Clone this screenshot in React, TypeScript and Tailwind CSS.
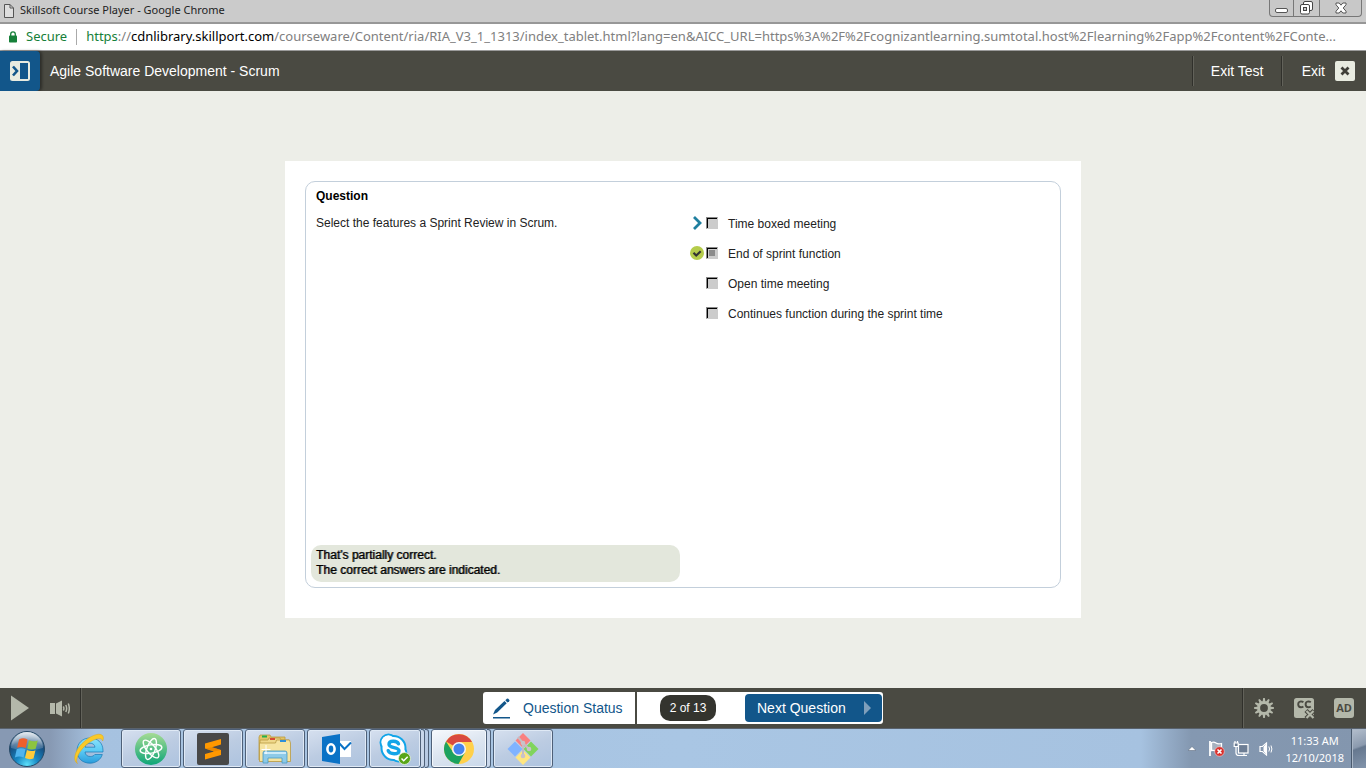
import React from "react";

type Answer = { id: string; label: string; mark?: "missed" | "correct"; checked?: boolean };

const answers: Answer[] = [
  { id: "a1", label: "Time boxed meeting", mark: "missed" },
  { id: "a2", label: "End of sprint function", mark: "correct", checked: true },
  { id: "a3", label: "Open time meeting" },
  { id: "a4", label: "Continues function during the sprint time" },
];

function TitleBar() {
  return (
    <div className="flex h-6 items-start justify-between border-b-2 border-[#979797] bg-[#cbcbcb] pl-1 pr-1 font-['Noto_Sans','Open_Sans',sans-serif]">
      <div className="flex h-[21px] items-center gap-[6px]">
        <svg width="10" height="14" viewBox="0 0 10 14" fill="#dedede" stroke="#555" strokeWidth="1">
          <path d="M.5.5h5.500l3.500 3.500v9.500h-9z" />
          <path d="M6 .5V4h3.500" fill="none" />
        </svg>
        <span className="whitespace-nowrap text-[11px] text-[#222]">Skillsoft Course Player - Google Chrome</span>
      </div>
      <div className="flex h-[17px] overflow-hidden rounded-b border border-t-0 border-[#777] bg-[#c8c8c8]">
        <button aria-label="Minimize" className="flex w-6 items-center justify-center border-r border-[#777]">
          <svg width="13" height="14" viewBox="0 0 13 14"><rect x=".5" y="7.500" width="12" height="4" rx="1.500" fill="#fff" stroke="#555" /></svg>
        </button>
        <button aria-label="Restore" className="flex w-[26px] items-center justify-center border-r border-[#777]">
          <svg width="13" height="14" viewBox="0 0 13 14" fill="#fff" stroke="#444">
            <rect x="3.500" y=".5" width="9" height="9" rx="1.500" />
            <rect x=".5" y="3.500" width="9" height="9.500" rx="1.500" />
            <rect x="3.500" y="6.500" width="3" height="3" fill="#ccc" />
          </svg>
        </button>
        <button aria-label="Close" className="flex w-[41px] items-center justify-center">
          <svg width="12" height="12" viewBox="0 0 12 12">
            <path d="M1 1h3.200L6 3.200 7.800 1H11v1.800L8.200 6 11 9.200V11H7.800L6 8.800 4.200 11H1V9.200L3.800 6 1 2.800z" fill="#fff" stroke="#555" />
          </svg>
        </button>
      </div>
    </div>
  );
}

function AddressBar() {
  return (
    <div className="flex h-[27px] items-center border-b border-[#9b9b9b] bg-white pl-2 pr-2 font-['Noto_Sans','Open_Sans',sans-serif] text-[13px]">
      <svg width="10" height="12" viewBox="0 0 10 12" className="shrink-0">
        <rect x="1" y="4.500" width="8" height="7" rx=".8" fill="#168039" />
        <path d="M2.700 5V3.200a2.300 2.300 0 0 1 4.600 0V5" fill="none" stroke="#168039" strokeWidth="1.300" />
      </svg>
      <span className="ml-2 shrink-0 text-[#168039]">Secure</span>
      <span className="ml-[9px] h-4 w-px shrink-0 bg-[#aaa]" />
      <span className="ml-[9px] min-w-0 truncate text-[#808080]">
        <span className="text-[#168039]">https</span>://<span className="text-black">cdnlibrary.skillport.com</span>
        /courseware/Content/ria/RIA_V3_1_1313/index_tablet.html?lang=en&amp;AICC_URL=https%3A%2F%2Fcognizantlearning.sumtotal.host%2Flearning%2Fapp%2Fcontent%2FConte...
      </span>
    </div>
  );
}

function CourseHeader() {
  return (
    <header className="flex h-10 items-center justify-between bg-[#4a4a42] text-sm text-white">
      <div className="flex h-full items-center gap-[10px]">
        <button aria-label="Open menu" className="flex h-full w-10 items-center justify-center rounded-r bg-[#12568a] shadow-[2px_0_3px_rgba(0,0,0,0.4)]">
          <svg width="20" height="20" viewBox="0 0 20 20">
            <rect width="20" height="20" rx="2.500" fill="#e8ebe0" />
            <rect x="10" y="2" width="8" height="16" fill="#12568a" />
            <path d="M3 5.500L7 10l-4 4.500" fill="none" stroke="#12568a" strokeWidth="2.600" />
          </svg>
        </button>
        <h1>Agile Software Development - Scrum</h1>
      </div>
      <div className="flex items-center pr-[11px]">
        <span className="h-[30px] w-[2px] border-l border-r border-l-[#30302b] border-r-[#62625a]" />
        <button className="w-[87px] whitespace-nowrap">Exit Test</button>
        <span className="h-[30px] w-[2px] border-l border-r border-l-[#30302b] border-r-[#62625a]" />
        <button className="flex items-center gap-[10px] pl-[19px]">
          Exit
          <svg width="20" height="20" viewBox="0 0 20 20">
            <rect width="20" height="20" rx="2" fill="#e8ebe0" />
            <path d="M6.500 6.500l7 7m0-7l-7 7" stroke="#3f3f38" strokeWidth="2.800" />
          </svg>
        </button>
      </div>
    </header>
  );
}

function AnswerMark({ mark }: { mark?: Answer["mark"] }) {
  if (mark === "missed")
    return (
      <svg width="14" height="14" viewBox="0 0 14 14">
        <path d="M4 1l6 6-6 6" fill="none" stroke="#1f7f9f" strokeWidth="2.800" />
      </svg>
    );
  if (mark === "correct")
    return (
      <svg width="14" height="14" viewBox="0 0 14 14">
        <circle cx="7" cy="7" r="7" fill="#b5cc4b" />
        <path d="M3.500 6.800l2.700 2.700 4.500-4.300" fill="none" stroke="#333" strokeWidth="2.200" />
      </svg>
    );
  return <span className="w-[14px]" />;
}

function Question() {
  return (
    <main className="flex grow items-center justify-center bg-[#edeee8] py-4">
      <div className="w-full max-w-[796px] bg-white px-5 pb-[30px] pt-5">
        <section className="flex min-h-[407px] flex-col rounded-[10px] border border-[#c3cfdb] p-[5px] text-xs leading-[15px] text-[#222]">
          <div className="grid grow grid-cols-[374px_1fr] content-start pl-[5px] pt-[2px]">
            <h2 className="col-span-2 mb-3 font-bold text-black">Question</h2>
            <p>Select the features a Sprint Review in Scrum.</p>
            <ul className="flex flex-col gap-[14px]">
              {answers.map((a) => (
                <li key={a.id} className="flex h-4 items-center">
                  <span className="mr-[2px] flex h-[14px] w-[14px] shrink-0 self-start justify-center">
                    <AnswerMark mark={a.mark} />
                  </span>
                  <input
                    id={a.id}
                    type="checkbox"
                    defaultChecked={a.checked}
                    className="mt-px h-3 w-3 shrink-0 self-start appearance-none border border-b-[#ccc] border-l-[#888] border-r-[#ccc] border-t-[#888] bg-[#ccc] shadow-[inset_1px_1px_0_#000] checked:bg-[linear-gradient(#8c8c8c,#8c8c8c)] checked:bg-[length:6px_6px] checked:bg-center checked:bg-no-repeat"
                  />
                  <label htmlFor={a.id} className="pl-[10px]">{a.label}</label>
                </li>
              ))}
            </ul>
          </div>
          <div className="w-full max-w-[369px] rounded-[10px] bg-[#e3e7dc] px-[5px] pb-1 pt-[3px] text-black [text-shadow:1px_0_0_rgba(0,0,0,0.6)]">
            <p>That's partially correct.</p>
            <p>The correct answers are indicated.</p>
          </div>
        </section>
      </div>
    </main>
  );
}

function GearIcon() {
  const teeth = Array.from({ length: 12 }, (_, i) => i * 30);
  return (
    <svg width="20" height="20" viewBox="0 0 20 20" fill="#b4b8aa">
      {teeth.map((t) => (
        <path key={t} d="M9.200 0h1.600l.7 4H8.500z" transform={`rotate(${t} 10 10)`} />
      ))}
      <circle cx="10" cy="10" r="5.400" fill="none" stroke="#b4b8aa" strokeWidth="3" />
    </svg>
  );
}

function PlayerBar() {
  return (
    <div className="grid h-10 grid-cols-[1fr_400px_1fr] items-center bg-[#4a4a42] text-sm">
      <div className="flex h-full items-center">
        <button aria-label="Play" className="flex w-10 justify-center">
          <svg width="18" height="26" viewBox="0 0 18 26"><path d="M0 .5L18 13 0 25.500z" fill="#b4b8aa" /></svg>
        </button>
        <button aria-label="Volume" className="flex w-10 justify-center">
          <svg width="20" height="17" viewBox="0 0 20 17" fill="#b4b8aa">
            <rect x="0" y="3" width="5" height="11" />
            <path d="M6 3.500L12 .5v16l-6-3z" />
            <path d="M13.300 6.500q1.200 2 0 4M15.800 5q1.700 3.500 0 7M18.300 3.500q2 5 0 10" fill="none" stroke="#b4b8aa" strokeWidth="1.500" />
          </svg>
        </button>
        <span className="h-full w-[2px] border-l border-r border-l-[#30302b] border-r-[#62625a]" />
      </div>
      <div className="flex h-8 gap-[2px] overflow-hidden rounded-[3px]">
        <button className="flex w-[152px] items-center gap-3 bg-white pl-[9px] text-[#12568a]">
          <svg width="19" height="21" viewBox="0 0 19 21" fill="#12568a">
            <path d="M1 16.500l2-4.500L12.500 3l2.200 2.200L5.200 14.500z" />
            <path d="M13.300 2.200L14.800.8q.8-.6 1.500 0l.9.9q.7.8 0 1.500l-1.700 1.400z" />
            <rect x="1" y="19" width="17" height="1.500" />
          </svg>
          <span className="whitespace-nowrap">Question Status</span>
        </button>
        <div className="flex grow items-center bg-white pl-[23px]">
          <span className="flex h-[26px] w-14 items-center justify-center whitespace-nowrap rounded-[10px] bg-[#34342e] text-xs text-white">2 of 13</span>
          <button className="ml-[29px] flex h-7 w-[137px] items-center justify-between rounded bg-[#12568a] pl-3 pr-[11px] text-white">
            Next Question
            <svg width="7" height="14" viewBox="0 0 7 14"><path d="M0 0l7 7-7 7z" fill="#7f9fbb" /></svg>
          </button>
        </div>
      </div>
      <div className="flex h-full items-center justify-end">
        <span className="h-full w-[2px] border-l border-r border-l-[#30302b] border-r-[#62625a]" />
        <button aria-label="Settings" className="flex w-10 justify-center"><GearIcon /></button>
        <button aria-label="Captions off" className="flex w-10 justify-center">
          <svg width="22" height="22" viewBox="0 0 22 22">
            <rect x="1" y="1" width="20" height="20" rx="2.500" fill="#b4b8aa" />
            <path d="M10.400 5.300Q9.300 4.400 7.900 4.400 5.200 4.700 5.200 7.400q.1 2.700 2.700 2.900 1.400 0 2.500-.8M17.800 5.300q-1.100-.9-2.500-.9-2.700.3-2.700 3 .1 2.700 2.700 2.900 1.400 0 2.500-.8" fill="none" stroke="#4a4a42" strokeWidth="1.900" />
            <path d="M13 13.500l8 8m0-8l-8 8" stroke="#4a4a42" strokeWidth="4.400" />
            <path d="M13.500 14l7 7m0-7l-7 7" stroke="#b4b8aa" strokeWidth="2.200" />
          </svg>
        </button>
        <button aria-label="Audio description" className="flex w-10 justify-center">
          <span className="flex h-5 w-5 items-center justify-center rounded-[3px] bg-[#b4b8aa] font-['Open_Sans',sans-serif] text-[11px] font-bold text-[#4a4a42]">AD</span>
        </button>
        <span className="w-[2px]" />
      </div>
    </div>
  );
}

function WindowsIcon() {
  return (
    <svg width="38" height="38" viewBox="0 0 38 38">
      <defs>
        <radialGradient id="orb" cx=".5" cy=".95" r=".9">
          <stop offset="0" stopColor="#5de0fa" />
          <stop offset=".35" stopColor="#1788c4" />
          <stop offset=".75" stopColor="#174b7c" />
          <stop offset="1" stopColor="#8ba5bd" />
        </radialGradient>
        <linearGradient id="gloss" x2="0" y2="1">
          <stop offset="0" stopColor="#fff" stopOpacity=".75" />
          <stop offset="1" stopColor="#fff" stopOpacity=".1" />
        </linearGradient>
      </defs>
      <circle cx="19" cy="19" r="17.500" fill="url(#orb)" stroke="#264966" />
      <path d="M3 18a16 16 0 0 1 32 0q-16 5-32 0z" fill="url(#gloss)" />
      <path d="M11 9.500q4-2.500 8.500 0L17.800 18q-4.500-2-8.700-.2z" fill="#ee5f2c" />
      <path d="M21 10.300q4.500 2 8.700.2l-2 8.300q-4.500 1.700-8.400-.3z" fill="#8cc440" />
      <path d="M8.700 19.300q4.300-2 8.800 0l-1.900 8.200q-4.500-2-8.700-.1z" fill="#4fb4ee" />
      <path d="M18.900 20q4.200 2 8.600.2l-2 8.200q-4.200 1.700-8.500-.3z" fill="#fccb3c" />
    </svg>
  );
}

function IEIcon() {
  return (
    <svg width="32" height="32" viewBox="0 0 32 32">
      <defs>
        <linearGradient id="ie" x2="0" y2="1">
          <stop offset="0" stopColor="#8ae2fb" />
          <stop offset=".5" stopColor="#5ccbf4" />
          <stop offset="1" stopColor="#2a9cdc" />
        </linearGradient>
      </defs>
      <path d="M30 19H12c.3 3 2.300 4.500 5.300 4.500 2 0 3.500-.6 4.500-2h7.500c-1.500 5.300-6.600 8.700-12.300 8.700C9.300 30.200 4 25 4 17.800S9.300 5 17 5s13 5 13 12.500zM12 14.200h10c-.4-2.600-2.300-4-5-4s-4.500 1.400-5 4z" fill="url(#ie)" stroke="#1878b4" strokeWidth=".7" />
      <path d="M4.500 30.500C-.5 28 1.500 18 9 10.500S26-1 29.500 2.500c1.200 1.300 1 3.300.2 5.500C29 3.500 20 5.500 12 13 4.500 20 2 28.500 4.500 30.500z" fill="#f9c928" stroke="#dda717" strokeWidth=".5" />
    </svg>
  );
}

function AtomIcon() {
  return (
    <svg width="32" height="32" viewBox="0 0 32 32">
      <defs><linearGradient id="atom" x2="0" y2="1"><stop offset="0" stopColor="#a5db94" /><stop offset="1" stopColor="#0da578" /></linearGradient></defs>
      <circle cx="16" cy="16" r="16" fill="url(#atom)" />
      <g fill="none" stroke="#fff" strokeWidth="1.400">
        <ellipse cx="16" cy="16" rx="11" ry="4.200" transform="rotate(-10 16 16)" />
        <ellipse cx="16" cy="16" rx="11" ry="4.200" transform="rotate(50 16 16)" />
        <ellipse cx="16" cy="16" rx="11" ry="4.200" transform="rotate(110 16 16)" />
      </g>
      <circle cx="16" cy="16" r="1.300" fill="#fff" />
    </svg>
  );
}

function SublimeIcon() {
  return (
    <svg width="32" height="32" viewBox="0 0 32 32">
      <rect width="32" height="32" rx="2" fill="#484848" />
      <path d="M8 10.500L24 6v5.500l-9 2.700L24 17v5L8 26.500V21l9-2.600L8 15.600z" fill="#ff9800" />
      <path d="M8 15.600l7-1.400 9 2.800-7 1.400z" fill="#e07f00" opacity=".6" />
    </svg>
  );
}

function FolderIcon() {
  return (
    <svg width="34" height="32" viewBox="0 0 34 32">
      <g stroke="#b99a42" strokeWidth=".8">
        <path d="M1 27V4l1-2h10l1 2h14v23z" fill="#e3c566" />
        <path d="M2 28V7h8l1-2h11l1 2h8v21z" fill="#efd88a" />
        <path d="M1.500 28.500V10h16l1-3h13l1 3v18.500z" fill="#f6e4a0" />
      </g>
      <path d="M4 2.500h5v2H4z" fill="#22b14c" /><path d="M12 5h5v2h-5z" fill="#d84a34" /><path d="M22 7h6v2h-6z" fill="#2f8fd8" />
      <path d="M5 30V20q0-2 2-2h20q2 0 2 2v10h-5v-5H10v5z" fill="#8dcae8" stroke="#469bc4" strokeWidth=".8" />
      <path d="M6 20h22" stroke="#e2f6ff" strokeWidth="1.500" />
      <path d="M8 12v9m-4.500-4.500h9" stroke="#fff" />
    </svg>
  );
}

function OutlookIcon() {
  return (
    <svg width="32" height="32" viewBox="0 0 32 32">
      <path d="M18 8h12v16H18z" fill="#fff" />
      <path d="M18 10l5.500 6L30 9.500" fill="none" stroke="#0a72c6" strokeWidth="2" />
      <path d="M1 4l18-3v30L1 28z" fill="#0a72c6" />
      <ellipse cx="10" cy="16" rx="3.600" ry="4.700" fill="none" stroke="#fff" strokeWidth="2.600" />
    </svg>
  );
}

function SkypeIcon() {
  return (
    <svg width="32" height="32" viewBox="0 0 32 32">
      <g fill="#fff" stroke="#12a5e8" strokeWidth="2">
        <circle cx="9.500" cy="9.500" r="8" />
        <circle cx="19.500" cy="20.500" r="8" />
        <circle cx="14.500" cy="15" r="12" />
      </g>
      <circle cx="9.500" cy="9.500" r="7" fill="#fff" />
      <circle cx="19.500" cy="20.500" r="7" fill="#fff" />
      <path d="M19.500 10.800c-1.400-3.500-9.500-3.500-9.500.4 0 4.300 10 2.400 10 6.500 0 4-9.300 4-10.800 0" fill="none" stroke="#12a5e8" strokeWidth="3.400" strokeLinecap="round" />
      <circle cx="25.500" cy="25.500" r="6" fill="#58a618" stroke="#e8f2e0" strokeWidth=".8" />
      <path d="M22.500 25.500l2.200 2.200 4-4" fill="none" stroke="#fff" strokeWidth="1.500" />
    </svg>
  );
}

function ChromeIcon() {
  return (
    <svg width="30" height="30" viewBox="0 0 30 30">
      <circle cx="15" cy="15" r="15" fill="#ffd04a" />
      <path d="M15 15L2 7.500A15 15 0 0 1 28 8H15z" fill="#d94a3f" />
      <path d="M2 7.500A15 15 0 0 0 14.500 30L21 18.500l-6 3.300a7 7 0 0 1-6-3.500z" fill="#1ba260" />
      <circle cx="15" cy="15" r="7" fill="#f4f4f4" />
      <circle cx="15" cy="15" r="5.500" fill="#4583ee" />
    </svg>
  );
}

function GitIcon() {
  return (
    <svg width="32" height="32" viewBox="0 0 32 32">
      <path d="M16 0l7.500 7.500L16 15 8.500 7.500z" fill="#f98080" />
      <path d="M8 8.500l7.500 7.500L8 23.500.5 16z" fill="#80b3ff" />
      <path d="M24 8.500l7.500 7.500-7.500 7.500-7.500-7.500z" fill="#80d45c" />
      <path d="M16 17l7.500 7.500L16 32l-7.500-7.500z" fill="#ffe680" />
      <path d="M11 4l5 6v13M16 10l6 6" fill="none" stroke="#c3bdc4" strokeWidth="2" />
      <g fill="#c9c2c9"><circle cx="16" cy="10" r="2.300" /><circle cx="22" cy="16" r="2.300" /><circle cx="16" cy="23" r="2.300" /></g>
    </svg>
  );
}

const apps: { name: string; icon: React.ReactNode; stacked?: boolean; active?: boolean }[] = [
  { name: "Atom", icon: <AtomIcon /> },
  { name: "Sublime Text", icon: <SublimeIcon /> },
  { name: "Explorer", icon: <FolderIcon /> },
  { name: "Outlook", icon: <OutlookIcon /> },
  { name: "Skype", icon: <SkypeIcon />, stacked: true },
  { name: "Chrome", icon: <ChromeIcon />, stacked: true, active: true },
  { name: "Git", icon: <GitIcon /> },
];

function Taskbar() {
  return (
    <footer className="flex h-10 items-center justify-between border-t border-[#59626d] bg-[linear-gradient(90deg,#8799b3_0,#8799b3_50px,#a6c2e0_95px,#a9c6e4_50%,#a6c2e0_calc(100%-225px),#8498b1_calc(100%-175px),#8396ae_100%)] font-['Noto_Sans','Open_Sans',sans-serif]">
      <div className="flex h-full items-center">
        <button aria-label="Start" className="ml-2 flex w-[38px] justify-center"><WindowsIcon /></button>
        <button aria-label="Internet Explorer" className="ml-[27px] mr-[16px] flex w-8 justify-center"><IEIcon /></button>
        <div className="flex h-full gap-[2px]">
          {apps.map((a) => (
            <button key={a.name} aria-label={a.name} className="flex h-[39px] w-[60px]">
              <span
                className={
                  a.active
                    ? "flex h-full grow items-center justify-center rounded-[3px] border border-[#4e6078] bg-[linear-gradient(160deg,#f6f9fd,#dce5f0_50%,#c9d8ea)] shadow-[inset_0_0_0_1px_#f4f8fc]"
                    : "flex h-full grow items-center justify-center rounded-[3px] border border-[#4e6078] bg-[linear-gradient(160deg,#d6e0ef,#bccce2_50%,#adc3df)] shadow-[inset_0_0_0_1px_#dfe9f5]"
                }
              >
                {a.icon}
              </span>
              {a.stacked && (
                <span className="flex h-full">
                  <span className="w-1 rounded-r-[3px] border-y border-r border-[#4e6078] bg-[#c9d7ea]" />
                  {!a.active && <span className="w-1 rounded-r-[3px] border-y border-r border-[#4e6078] bg-[#b7cae3]" />}
                </span>
              )}
            </button>
          ))}
        </div>
      </div>
      <div className="flex h-full items-center">
        <svg width="8" height="5" viewBox="0 0 8 5" className="mr-[12px]"><path d="M0 4.500L4 .5l4 4z" fill="#fff" stroke="#4e5d72" strokeWidth=".5" /></svg>
        <svg width="17" height="17" viewBox="0 0 17 17" className="mr-[8px]">
          <path d="M2 1v15" stroke="#fff" strokeWidth="1.800" />
          <path d="M3.500 2.500q2.500-1 4.500.5t5.500.5V11q-3 1-5.500 0t-4.500-.5z" fill="#a7b2c0" stroke="#fff" strokeWidth="1.300" />
          <circle cx="11.500" cy="11.500" r="4.800" fill="#d9302c" stroke="#f4d5d5" strokeWidth=".6" />
          <path d="M9.500 9.500l4 4m0-4l-4 4" stroke="#fff" strokeWidth="1.600" />
        </svg>
        <svg width="16" height="16" viewBox="0 0 16 16" className="mr-[10px]" fill="none" stroke="#fff" strokeWidth="1.200">
          <rect x="5.500" y="3.500" width="9.500" height="8.500" fill="#6d7e95" />
          <path d="M8 14.500h6M11 12v2.500M3 6v6q0 2.500 3 2.500h2M2 0v2M4.500 0v2" />
          <path d="M1.200 2h4v3.500h-4z" fill="#6d7e95" />
        </svg>
        <svg width="14" height="14" viewBox="0 0 14 14" className="mr-[12px]" fill="none" stroke="#fff">
          <path d="M1 4.500h2.500L7.500 1v12L3.500 9.500H1z" fill="#8396ae" strokeWidth="1.200" />
          <path d="M5 5l2-2v8L5 9z" fill="#fff" />
          <path d="M9.800 4.500q1.600 2.500 0 5M12 3.500q1.800 3.500 0 7" />
        </svg>
        <div className="mr-[7px] whitespace-nowrap text-center text-[11px] leading-[17px] text-white">
          <p>11:33 AM</p>
          <p>12/10/2018</p>
        </div>
        <button aria-label="Show desktop" className="h-full w-[15px] border-l border-[#4a5a6e] bg-[linear-gradient(160deg,#b4bfcd,#8b9aae_45%,#66788f_50%,#8294ab)] shadow-[inset_1px_1px_0_#a9b6c6]" />
      </div>
    </footer>
  );
}

export default function App() {
  return (
    <div className="flex min-h-screen flex-col bg-[#edeee8] font-['Liberation_Sans',Arial,sans-serif]">
      <TitleBar />
      <AddressBar />
      <CourseHeader />
      <Question />
      <PlayerBar />
      <Taskbar />
    </div>
  );
}
